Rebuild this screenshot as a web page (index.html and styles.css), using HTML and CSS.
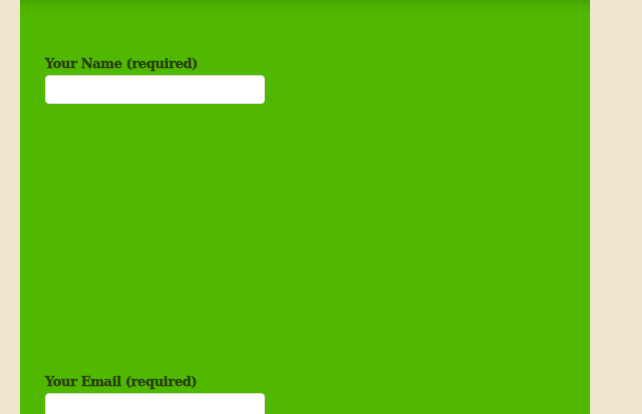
FILE: index.html
```html
<!DOCTYPE html>
<html>
<head>
<meta charset="utf-8">
<link rel="stylesheet" href="styles.css">
</head>
<body>
<div class="panel">
  <form class="form">
    <div class="field">
      <label class="label">Your Name (required)</label>
      <input class="input" type="text">
    </div>
    <div class="spacer"></div>
    <div class="field">
      <label class="label">Your Email (required)</label>
      <input class="input" type="text">
    </div>
  </form>
</div>
</body>
</html>
```
FILE: styles.css
```css
html, body {
  margin: 0;
  padding: 0;
  background: #efe5cf;
  height: 100%;
  overflow: hidden;
}
.panel {
  margin-left: 20px;
  width: 570px;
  height: 414px;
  background: linear-gradient(to bottom, #47a200 0px, #4cb100 6px, #50b800 14px, #50b800 100%);
  box-sizing: border-box;
  padding: 55px 25px 0 25px;
}
.form {
  display: flex;
  flex-direction: column;
}
.field {
  display: flex;
  flex-direction: column;
  gap: 3px;
}
.label {
  font-family: "DejaVu Serif", "Liberation Serif", serif;
  font-weight: bold;
  font-size: 13px;
  line-height: 17px;
  color: #2a4411;
  letter-spacing: -0.35px;
  -webkit-text-stroke: 0.3px #2a4411;
}
.input {
  width: 220px;
  height: 29px;
  box-sizing: border-box;
  border: 1px solid #d6dccf;
  border-radius: 4px;
  background: #ffffff;
  margin: 0;
  padding: 0;
}
.spacer {
  height: 269px;
}
```
